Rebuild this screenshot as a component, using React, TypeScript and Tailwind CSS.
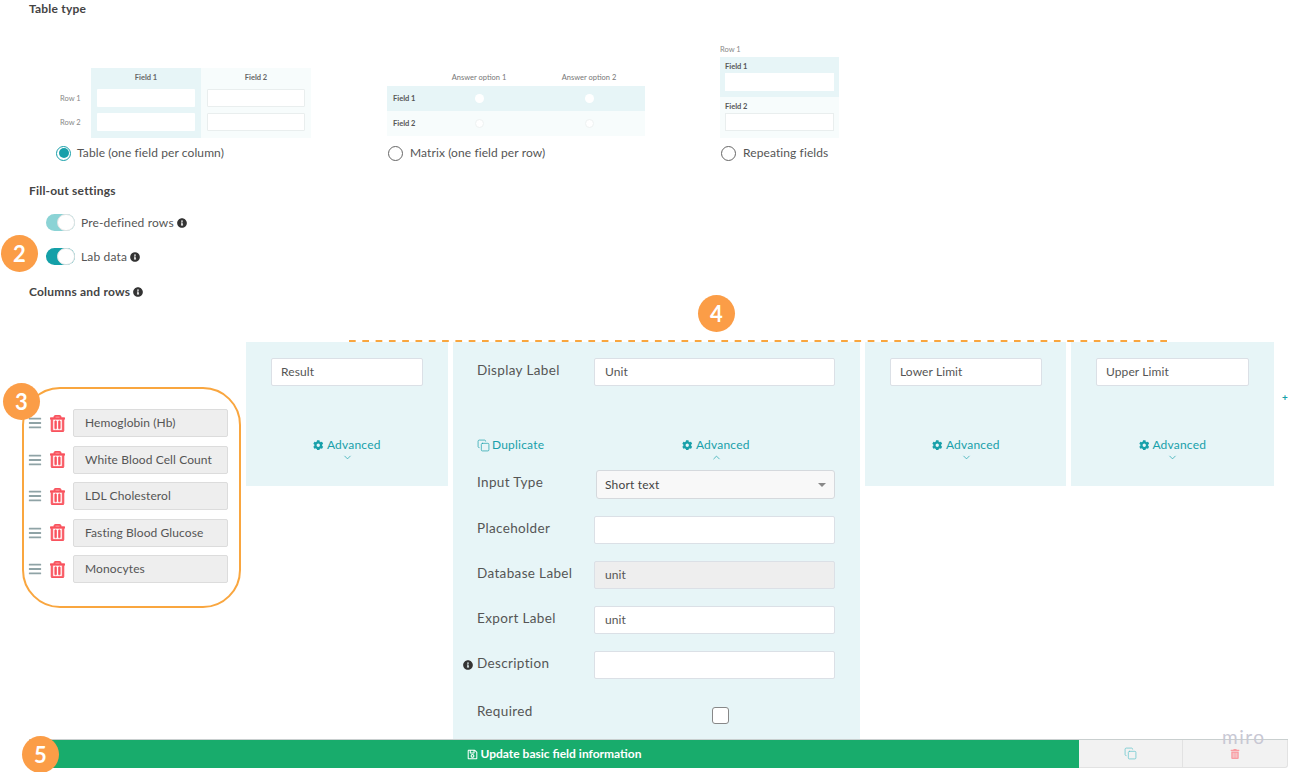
import React from "react";
import { FaInfoCircle, FaCog, FaRegTrashAlt, FaBars, FaRegSave, FaTrashAlt } from "react-icons/fa";
import { Copy, ChevronDown, ChevronUp } from "lucide-react";

const Badge = ({ n, cls }: { n: string; cls: string }) => (
  <div className={"absolute z-20 flex h-[37px] w-[37px] items-center justify-center rounded-full bg-[#fb9d47] text-[22px] font-bold leading-none text-white " + cls}>{n}</div>
);

const Radio = ({ on, label }: { on?: boolean; label: string }) => (
  <div className={"flex h-[16px] items-center " + (on ? "gap-[6px]" : "gap-[7px]")}>
    {on ? (
      <span className="flex h-[15px] w-[15px] items-center justify-center rounded-full border border-[#18a0aa]">
        <span className="h-[10px] w-[10px] rounded-full bg-[#18a0aa]" />
      </span>
    ) : (
      <span className="h-[15px] w-[15px] rounded-full border border-[#666]" />
    )}
    <span className="text-[12px] tracking-[0.1px] text-[#555]">{label}</span>
  </div>
);

const Toggle = ({ light, label }: { light?: boolean; label: string }) => (
  <div className="flex h-[18px] items-center pl-[46px]">
    <span className={"flex h-[17px] w-[29px] justify-end rounded-full " + (light ? "bg-[#8bd3d5]" : "bg-[#14a0a8]")}>
      <span className="h-[17px] w-[18px] rounded-full border border-[#e3e3e3] bg-white" />
    </span>
    <span className="ml-[6px] pt-[1px] text-[12px] tracking-[0.15px] text-[#555]">{label}</span>
    <FaInfoCircle className="ml-[3px] mt-[1px] text-[10px] text-[#333]" />
  </div>
);

const TextBox = ({ value, cls }: { value: string; cls: string }) => (
  <div className={"flex h-[28px] items-center rounded-[2px] border border-[#dbe0e6] px-[10px] text-[12px] tracking-[0.1px] text-[#555] " + cls}>{value}</div>
);

const Advanced = ({ up }: { up?: boolean }) => (
  <div className="flex flex-col items-center text-[#18a0aa]">
    <div className="flex h-[14px] items-center gap-[3px] text-[12px] tracking-[0.2px]">
      <FaCog className="text-[10.5px]" />
      Advanced
    </div>
    {up ? <ChevronUp size={11} strokeWidth={1.5} /> : <ChevronDown size={11} strokeWidth={1.5} />}
  </div>
);

const SmallColumn = ({ label, w, bw }: { label: string; w: string; bw: string }) => (
  <div className={"h-[144px] bg-[#e7f5f7] pl-[25px] pt-[16px] " + w}>
    <TextBox value={label} cls={"bg-white pl-[9px] " + bw} />
    <div className={"mt-[52px] " + bw}>
      <Advanced />
    </div>
  </div>
);

const FieldRow = ({ label, children }: { label: string; children: React.ReactNode }) => (
  <div className="flex items-start">
    <div className="w-[117px] pt-[2px] text-[13.5px] tracking-[0.35px] text-[#555]">{label}</div>
    {children}
  </div>
);

const heading = "flex h-[18px] items-center pl-[29px] text-[12px] font-bold tracking-[0.2px] text-[#444]";
const rows = ["Hemoglobin (Hb)", "White Blood Cell Count", "LDL Cholesterol", "Fasting Blood Glucose", "Monocytes"];

export default function App() {
  return (
    <div className="relative h-[772px] w-[1293px] overflow-hidden bg-white font-['Lato','Liberation_Sans',sans-serif]">
      <div className="h-[739px] overflow-hidden">
        <div className={heading}>Table type</div>

        <div className="mt-[27px] grid grid-cols-[331px_333px_1fr] items-end pl-[56px]">
          <div>
            <div className="ml-[4px] flex">
              <div className="flex w-[31px] flex-col pt-[21px] text-[7.5px] text-[#888]">
                <div className="flex h-[18px] items-center pt-[1px]">Row 1</div>
                <div className="mt-[6px] flex h-[18px] items-center pt-[1px]">Row 2</div>
              </div>
              <div className="h-[70px] w-[110px] bg-[#e7f5f7] px-[6px]">
                <div className="flex h-[21px] items-center justify-center pb-[2px] text-[7.5px] font-bold text-[#666]">Field 1</div>
                <div className="h-[18px] rounded-[1px] bg-white" />
                <div className="mt-[6px] h-[18px] rounded-[1px] bg-white" />
              </div>
              <div className="h-[70px] w-[110px] bg-[#f7fcfc] px-[6px]">
                <div className="flex h-[21px] items-center justify-center pb-[2px] text-[7.5px] font-bold text-[#666]">Field 2</div>
                <div className="h-[18px] rounded-[1px] border border-[#e9eeee] bg-white" />
                <div className="mt-[6px] h-[18px] rounded-[1px] border border-[#e9eeee] bg-white" />
              </div>
            </div>
            <div className="mt-[7px]"><Radio on label="Table (one field per column)" /></div>
          </div>

          <div>
            <div className="w-[258px] pb-[2px]">
              <div className="grid h-[15px] grid-cols-[37px_110px_110px] items-center pb-[2px] text-center text-[7.5px] text-[#777]">
                <span />
                <span>Answer option 1</span>
                <span>Answer option 2</span>
              </div>
              <div className="grid h-[25px] grid-cols-[37px_110px_110px] items-center bg-[#e7f5f7] text-[7.5px] font-bold text-[#555]">
                <span className="pl-[6px]">Field 1</span>
                <span className="mx-auto h-[9px] w-[9px] rounded-full bg-white" />
                <span className="mx-auto h-[9px] w-[9px] rounded-full bg-white" />
              </div>
              <div className="grid h-[25px] grid-cols-[37px_110px_110px] items-center bg-[#f7fcfc] text-[7.5px] font-bold text-[#555]">
                <span className="pl-[6px]">Field 2</span>
                <span className="mx-auto h-[9px] w-[9px] rounded-full border border-[#eef2f2] bg-white" />
                <span className="mx-auto h-[9px] w-[9px] rounded-full border border-[#eef2f2] bg-white" />
              </div>
            </div>
            <div className="ml-[1px] mt-[7px]"><Radio label="Matrix (one field per row)" /></div>
          </div>

          <div>
            <div className="w-[119px]">
              <div className="flex h-[12px] items-center pb-[3px] text-[7.5px] text-[#888]">Row 1</div>
              <div className="h-[40px] bg-[#e7f5f7] px-[5px]">
                <div className="flex h-[16px] items-center pt-[3px] text-[7.5px] font-bold text-[#555]">Field 1</div>
                <div className="h-[18px] bg-white" />
              </div>
              <div className="h-[41px] bg-[#f7fcfc] px-[5px]">
                <div className="flex h-[16px] items-center pt-[3px] text-[7.5px] font-bold text-[#555]">Field 2</div>
                <div className="h-[18px] border border-[#e9eeee] bg-white" />
              </div>
            </div>
            <div className="ml-[1px] mt-[7px]"><Radio label="Repeating fields" /></div>
          </div>
        </div>

        <div className={"mt-[21px] " + heading}>Fill-out settings</div>
        <div className="mt-[13px]"><Toggle light label="Pre-defined rows" /></div>
        <div className="mt-[16px]"><Toggle label="Lab data" /></div>
        <div className={"mt-[18px] " + heading}>
          Columns and rows
          <FaInfoCircle className="ml-[3px] text-[10px] text-[#333]" />
        </div>

        <div className="mt-[41px] flex items-start">
          <div className="w-[246px] pl-[22px] pt-[45px]">
            <div className="flex h-[221px] w-[219px] flex-col gap-[8.6px] rounded-[38px] border-2 border-[#f9a63f] pl-[4px] pt-[20px]">
              {rows.map((r) => (
                <div key={r} className="flex h-[28px] items-center">
                  <FaBars className="h-[14px] w-[14px] text-[#8fa3a6]" />
                  <FaRegTrashAlt className="ml-[8px] h-[17px] w-[15px] text-[#f9525d]" stroke="currentColor" strokeWidth={22} />
                  <TextBox value={r} cls="ml-[8px] w-[155px] border-[#dcdcdc] bg-[#eeeeee] pl-[11px]" />
                </div>
              ))}
            </div>
          </div>

          <div className="flex gap-[5px]">
            <SmallColumn label="Result" w="w-[202px]" bw="w-[152px]" />

            <div className="h-[398px] w-[407px] bg-[#e7f5f7] pl-[24px] pt-[16px]">
              <FieldRow label="Display Label">
                <TextBox value="Unit" cls="w-[241px] bg-white" />
              </FieldRow>
              <div className="relative mt-[52px] flex h-[32px] w-[358px] justify-center">
                <div className="absolute left-0 top-0 flex h-[14px] items-center gap-[2px] text-[12px] tracking-[0.2px] text-[#18a0aa]">
                  <Copy size={13} strokeWidth={1.3} />
                  Duplicate
                </div>
                <div className="ml-[120px]"><Advanced up /></div>
              </div>
              <FieldRow label="Input Type">
                <div className="ml-[2px] flex h-[29px] w-[239px] items-center justify-between rounded-[3px] border border-[#d5d9dd] bg-[#f8f8f8] px-[8px] text-[12px] tracking-[0.2px] text-[#444]">
                  Short text
                  <span className="h-0 w-0 border-x-[4px] border-t-[4px] border-x-transparent border-t-[#888]" />
                </div>
              </FieldRow>
              <div className="mt-[17px] flex flex-col gap-[17px]">
                <FieldRow label="Placeholder"><TextBox value="" cls="w-[241px] bg-white" /></FieldRow>
                <FieldRow label="Database Label"><TextBox value="unit" cls="w-[241px] bg-[#eeeeee]" /></FieldRow>
                <FieldRow label="Export Label"><TextBox value="unit" cls="w-[241px] bg-white" /></FieldRow>
                <div className="relative">
                  <FaInfoCircle className="absolute left-[-14px] top-[9px] text-[10px] text-[#333]" />
                  <FieldRow label="Description"><TextBox value="" cls="w-[241px] bg-white" /></FieldRow>
                </div>
                <div className="flex items-start">
                  <div className="w-[235px] pt-[5px] text-[13.5px] tracking-[0.35px] text-[#555]">Required</div>
                  <span className="mt-[11px] h-[17px] w-[17px] rounded-[3px] border border-[#888] bg-white" />
                </div>
              </div>
            </div>

            <SmallColumn label="Lower Limit" w="w-[201px]" bw="w-[152px]" />
            <SmallColumn label="Upper Limit" w="w-[203px]" bw="w-[153px]" />
          </div>
          <div className="ml-[8px] mt-[50px] text-[10px] font-bold leading-none text-[#18a0aa]">+</div>
        </div>
      </div>

      <div className="ml-[29px] flex h-[29px] w-[1259px] border-t border-[#c9cfcf]">
        <div className="flex w-[1050px] items-center justify-center gap-[3px] bg-[#18ac6c] text-[12px] font-bold text-white">
          <FaRegSave className="text-[11px]" />
          Update basic field information
        </div>
        <div className="flex w-[104px] items-center justify-center border-b border-r border-[#e2e2e2] bg-[#f2f2f2] text-[#5cc3cb]">
          <Copy size={13} strokeWidth={1.3} />
        </div>
        <div className="flex w-[105px] items-center justify-center rounded-br-[3px] border-b border-r border-[#e2e2e2] bg-[#f2f2f2] text-[#f99ca2]">
          <FaTrashAlt className="text-[10px]" />
        </div>
      </div>

      <svg className="absolute left-[349px] top-[340px] z-10" width="820" height="2">
        <line x1="0" y1="1" x2="820" y2="1" stroke="#f9a63f" strokeWidth="2" strokeDasharray="6.7 6.6" />
      </svg>
      <Badge n="2" cls="left-[1px] top-[235px]" />
      <Badge n="3" cls="left-[3px] top-[383px]" />
      <Badge n="4" cls="left-[698px] top-[295px]" />
      <Badge n="5" cls="left-[22px] top-[736px]" />
      <div className="absolute left-[1222px] top-[727px] z-10 text-[19px] leading-[20px] tracking-[1.5px] text-[#c8c8d4]">miro</div>
    </div>
  );
}
